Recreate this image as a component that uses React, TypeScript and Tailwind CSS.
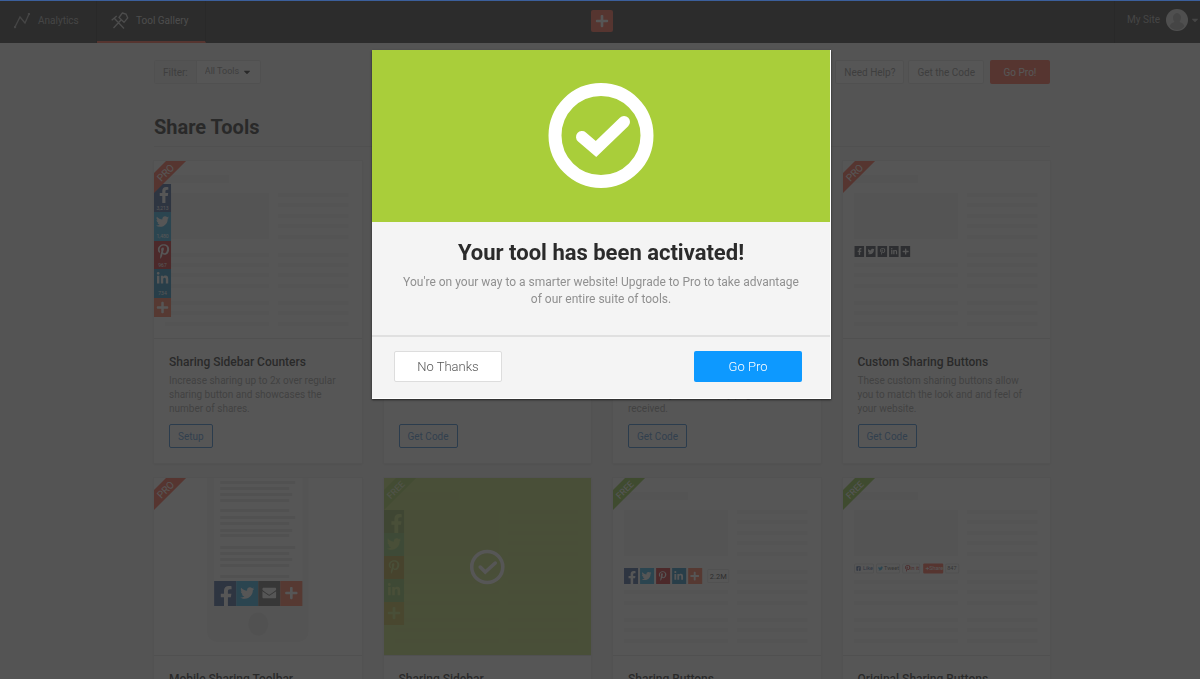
import { ReactNode, useState } from "react";
import {
  FaCaretDown,
  FaEnvelope,
  FaFacebookF,
  FaFacebookSquare,
  FaLinkedinIn,
  FaPinterestP,
  FaPlus,
  FaTwitter,
} from "react-icons/fa";

type Tool = {
  title: string;
  description: string;
  action: string;
  badge: "PRO" | "FREE" | null;
  preview: ReactNode;
};

const NETWORKS = [
  { Icon: FaFacebookF, color: "#3b5998", count: "3,213" },
  { Icon: FaTwitter, color: "#2ba9e1", count: "1,480" },
  { Icon: FaPinterestP, color: "#cb2027", count: "967" },
  { Icon: FaLinkedinIn, color: "#1c87bd", count: "734" },
  { Icon: FaPlus, color: "#fc6d4c", count: "" },
];

const RIGHT_LINES = [32, 42, 53, 63, 74, 92, 102, 112, 123, 140, 150, 161];

function Wireframe({ leftFrom = 92 }: { leftFrom?: number }) {
  return (
    <g fill="#f3f3f3">
      <rect x="11" y="14" width="64" height="8" />
      <rect x="11" y="32" width="104" height="46" />
      {RIGHT_LINES.map((y) => (
        <rect key={y} x="124" y={y} width="70" height="4" />
      ))}
      {RIGHT_LINES.filter((y) => y >= leftFrom).map((y) => (
        <rect key={y} x="11" y={y} width="104" height="4" />
      ))}
    </g>
  );
}

function Ribbon({ badge }: { badge: "PRO" | "FREE" }) {
  return (
    <g>
      <path
        d="M12 0H32L0 32V12Z"
        fill={badge === "PRO" ? "#fc5a42" : "#8cc63f"}
      />
      <text
        x="12"
        y="15"
        fill="#fff"
        fontSize={badge === "PRO" ? 10 : 9}
        textAnchor="middle"
        transform="rotate(-45 12 12)"
      >
        {badge}
      </text>
    </g>
  );
}

function CountersPreview() {
  const tops = [23, 51, 80, 108, 137, 156];
  return (
    <>
      <Wireframe />
      {NETWORKS.map(({ Icon, color, count }, i) => (
        <g key={color}>
          <rect
            y={tops[i]}
            width="17"
            height={tops[i + 1] - tops[i]}
            fill={color}
          />
          <Icon
            x={2}
            y={tops[i] + 3}
            size={i === 0 ? 16 : i === 2 ? 15 : 13}
            color="#fff"
          />
          <text
            x="8.5"
            y={tops[i] + 26}
            fontSize="5"
            fill="#fff"
            textAnchor="middle"
          >
            {count}
          </text>
        </g>
      ))}
    </>
  );
}

function CustomPreview() {
  return (
    <>
      <Wireframe leftFrom={102} />
      {NETWORKS.map(({ Icon, color }, i) => (
        <g key={color}>
          <rect x={11.5 + i * 11.5} y="85" width="9.5" height="11" fill="#333a45" />
          <Icon x={13 + i * 11.5} y="87" size={7} color="#fff" />
        </g>
      ))}
    </>
  );
}

function MobilePreview() {
  const lines = [
    [3, 75], [9, 69], [15, 72], [21, 69], [31, 69], [38, 75], [44, 69],
    [51, 72], [56, 69], [68, 75], [74, 69], [80, 72], [86, 69], [97, 69],
  ];
  const buttons = [
    { Icon: FaFacebookF, color: "#3b5998" },
    { Icon: FaTwitter, color: "#2ba9e1" },
    { Icon: FaEnvelope, color: "#666666" },
    { Icon: FaPlus, color: "#fc6d4c" },
  ];
  return (
    <>
      <path d="M53 0H154V154a10 10 0 0 1-10 10H63a10 10 0 0 1-10-10Z" fill="#f3f3f3" />
      <rect x="60" width="88" height="104" fill="#fff" />
      {lines.map(([y, width]) => (
        <rect key={y} x="66" y={y} width={width} height="3" fill="#e6e6e6" />
      ))}
      {buttons.map(({ Icon, color }, i) => (
        <g key={color}>
          <rect x={60 + i * 22} y="103" width="22" height="25" fill={color} />
          {i === 0 ? (
            <Icon x="62" y="108" size={20} color="#fff" />
          ) : (
            <Icon x={64 + i * 22} y="108" size={14} color="#fff" />
          )}
        </g>
      ))}
      <ellipse cx="104" cy="146" rx="10" ry="11.5" fill="#e6e6e6" />
    </>
  );
}

function SidebarPreview() {
  return (
    <>
      <Wireframe />
      {NETWORKS.map(({ Icon, color }, i) => (
        <g key={color}>
          <rect y={32 + i * 23} width="20" height="23" fill={color} />
          <Icon
            x="3"
            y={36 + i * 23}
            size={i === 0 ? 19 : 14}
            color="#fff"
          />
        </g>
      ))}
      <rect width="207" height="178" fill="#a9ce3a" opacity="0.75" />
      <g opacity="0.6">
        <Ribbon badge="FREE" />
      </g>
      <circle cx="103" cy="89" r="15.5" fill="none" stroke="#fff" strokeWidth="3.5" />
      <path
        d="M96 89l5 5 10-9"
        fill="none"
        stroke="#fff"
        strokeWidth="3.5"
        strokeLinecap="round"
      />
    </>
  );
}

function ButtonsPreview() {
  return (
    <>
      <Wireframe leftFrom={112} />
      {NETWORKS.map(({ Icon, color }, i) => (
        <g key={color}>
          <rect x={11 + i * 16} y="90" width="14" height="16" fill={color} />
          <Icon
            x={12.5 + i * 16}
            y="93"
            size={i === 0 ? 13 : 10}
            color="#fff"
          />
        </g>
      ))}
      <rect x="94.5" y="91.5" width="21" height="13" rx="1" fill="#fff" stroke="#e5e5e5" />
      <text x="105" y="101" fontSize="7.5" fill="#333" textAnchor="middle">
        2.2M
      </text>
    </>
  );
}

function OriginalPreview() {
  return (
    <>
      <Wireframe leftFrom={102} />
      <g fill="#fff" stroke="#ddd">
        <rect x="11.5" y="86" width="19" height="9" rx="1" />
        <rect x="33.5" y="86" width="23" height="9" rx="1" />
        <rect x="59.5" y="86" width="17" height="9" rx="1" />
        <rect x="102.5" y="86" width="13" height="9" rx="1" />
      </g>
      <rect x="80" y="85.5" width="20" height="10" rx="1" fill="#fc5a42" />
      <FaFacebookSquare x="13" y="88" size={5} color="#3b5998" />
      <FaTwitter x="35" y="88" size={5} color="#2ba9e1" />
      <FaPinterestP x="61" y="87" size={7} color="#cb2027" />
      <FaPlus x="82" y="88.5" size={4} color="#fff" />
      <g fontSize="5.5" fill="#555">
        <text x="20" y="92.5" fill="#3b5998">Like</text>
        <text x="41" y="92.5">Tweet</text>
        <text x="67" y="92.5" fill="#cb2027">in it</text>
        <text x="86" y="92.5" fill="#fff">Share</text>
        <text x="104" y="92.5">847</text>
      </g>
    </>
  );
}

const TOOLS: Tool[] = [
  {
    title: "Sharing Sidebar Counters",
    description:
      "Increase sharing up to 2x over regular sharing button and showcases the number of shares.",
    action: "Setup",
    badge: "PRO",
    preview: <CountersPreview />,
  },
  {
    title: "Sharing Toolbar",
    description: "Put share buttons on every page.",
    action: "Get Code",
    badge: "PRO",
    preview: <Wireframe />,
  },
  {
    title: "Share Counters",
    description:
      "Share buttons that show your visitors how many shares every page has received.",
    action: "Get Code",
    badge: "PRO",
    preview: <Wireframe />,
  },
  {
    title: "Custom Sharing Buttons",
    description:
      "These custom sharing buttons allow you to match the look and and feel of your website.",
    action: "Get Code",
    badge: "PRO",
    preview: <CustomPreview />,
  },
  {
    title: "Mobile Sharing Toolbar",
    description: "Share buttons made for phones.",
    action: "Get Code",
    badge: "PRO",
    preview: <MobilePreview />,
  },
  {
    title: "Sharing Sidebar",
    description: "Share buttons on the side of the page.",
    action: "Get Code",
    badge: null,
    preview: <SidebarPreview />,
  },
  {
    title: "Sharing Buttons",
    description: "Share buttons within your content.",
    action: "Get Code",
    badge: "FREE",
    preview: <ButtonsPreview />,
  },
  {
    title: "Original Sharing Buttons",
    description: "The native buttons of each network.",
    action: "Get Code",
    badge: "FREE",
    preview: <OriginalPreview />,
  },
];

function ToolCard({ tool }: { tool: Tool }) {
  return (
    <article className="flex flex-col bg-white shadow-[0_0_0_1px_#ececec,0_1px_2px_#ccc]">
      <svg
        viewBox="0 0 207 177"
        preserveAspectRatio="none"
        className="block h-[177px] w-full"
        aria-hidden="true"
      >
        {tool.preview}
        {tool.badge && <Ribbon badge={tool.badge} />}
      </svg>
      <div className="flex flex-1 flex-col items-start border-t border-[#e2e2e2] p-[15px]">
        <h3 className="text-xs leading-4 font-medium text-[#222]">
          {tool.title}
        </h3>
        <p className="mt-1 min-h-[42px] pr-2 text-[10px] leading-[14px] text-[#999]">
          {tool.description}
        </p>
        <button className="mt-2 h-6 cursor-pointer rounded-xs border border-[#2a7fd0] px-2 text-[10px] text-[#4a8fd6]">
          {tool.action}
        </button>
      </div>
    </article>
  );
}

function Header() {
  return (
    <header className="grid h-[43px] grid-cols-[1fr_auto_1fr] bg-[#2e2e2e] text-[10px] text-[#ccc]">
      <nav className="flex">
        <a href="#analytics" className="flex w-[97px] items-center gap-2 border-r border-[#222] pb-0.5 pl-3.5 text-[#aaa]">
          <svg width="16" height="16" viewBox="0 0 16 16" fill="none" stroke="currentColor" strokeWidth="1.3">
            <path d="M1 14L6 4l5 6 4-9" />
            <circle cx="1" cy="14" r=".6" />
            <circle cx="15" cy="1" r=".6" />
          </svg>
          Analytics
        </a>
        <a href="#tools" className="flex w-[109px] items-center gap-[7px] border-r border-b-2 border-r-[#222] border-b-[#fc5a42] pl-3.5">
          <svg width="18" height="18" viewBox="0 0 18 18" fill="none" stroke="currentColor" strokeWidth="1.3">
            <path d="M11.3 1L15 2l1.7 4-3.7 4.3L8 5.5ZM10 8l-7.5 8M.7 8.3l5-4.3M3.5 6.5L13 16.5" />
          </svg>
          Tool Gallery
        </a>
      </nav>
      <div className="ml-1 flex items-center pb-0.5">
        <div className="flex size-[22px] items-center justify-center rounded-xs bg-[#fc5a42]">
          <FaPlus size={14} className="text-white" />
        </div>
      </div>
      <div className="flex justify-end">
        <button className="flex cursor-pointer items-center border-l border-[#222] pb-1 pl-3 text-[#aaa]">
          My Site
          <svg width="22" height="22" viewBox="0 0 22 22" className="ml-1.5">
            <circle cx="11" cy="11" r="11" fill="#ddd" />
            <path d="M11 4a4.5 4.5 0 0 1 4 5c0 2-1 3-1.5 4 2 .8 4 1.5 5 4a9 9 0 0 1-15 0c1-2.5 3-3.2 5-4C8 12 7 11 7 9a4.5 4.5 0 0 1 4-5Z" fill="#aaa" />
          </svg>
          <FaCaretDown size={10} className="ml-0.5" />
        </button>
      </div>
    </header>
  );
}

function ActivatedModal({ onClose }: { onClose: () => void }) {
  return (
    <div className="fixed inset-0 flex items-start justify-center bg-[#2c2c2c]/80 pt-[50px] pl-[3px]">
      <div
        role="dialog"
        aria-labelledby="modal-title"
        className="w-full max-w-[459px] border-r border-b border-white bg-[#f4f4f4] shadow-[0_1px_2px_rgba(0,0,0,0.6)]"
      >
        <div className="flex h-[172px] items-center justify-center bg-[#a9ce3a]">
          <svg width="106" height="106" viewBox="0 0 106 106" fill="none" stroke="#fff">
            <circle cx="53" cy="52.5" r="46" strokeWidth="13" />
            <path d="M34 54l14 12 28-27" strokeWidth="12" strokeLinecap="round" />
          </svg>
        </div>
        <div className="h-[115px] border-b-2 border-[#e0e0e0] px-7 pt-4 text-center">
          <h2 id="modal-title" className="text-[22px] leading-[30px] font-bold text-[#2b2b2b]">
            Your tool has been activated!
          </h2>
          <p className="mt-1.5 text-xs leading-[17px] text-[#909090]">
            You're on your way to a smarter website! Upgrade to Pro to take
            advantage of our entire suite of tools.
          </p>
        </div>
        <div className="flex justify-between pt-3.5 pr-7 pb-4 pl-[22px] text-[13px] font-light">
          <button
            onClick={onClose}
            className="h-[31px] w-[108px] cursor-pointer rounded-xs border border-[#ddd] bg-white text-[#555]"
          >
            No Thanks
          </button>
          <button className="h-[31px] w-[108px] cursor-pointer rounded-xs bg-[#0d99ff] text-white">
            Go Pro
          </button>
        </div>
      </div>
    </div>
  );
}

function App() {
  const [showModal, setShowModal] = useState(true);

  return (
    <div
      className={`min-h-screen bg-[#f3f3f3] font-[Roboto,sans-serif] ${showModal ? "h-screen overflow-hidden" : ""}`}
    >
      <Header />
      <main className="mx-auto max-w-[900px] pt-[17px] pb-8 pl-1">
        <div className="flex justify-between text-[10px] text-[#888]">
          <div className="flex h-6 rounded-xs border border-[#e2e2e2] bg-white">
            <label
              htmlFor="filter"
              className="flex items-center border-r border-[#e2e2e2] bg-[#eee] px-2"
            >
              Filter:
            </label>
            <div className="relative flex items-center">
              <select
                id="filter"
                className="h-full w-[63px] cursor-pointer appearance-none pl-2 text-[9px] outline-none"
              >
                <option>All Tools</option>
                <option>Share Tools</option>
              </select>
              <FaCaretDown size={10} className="pointer-events-none absolute right-2 text-[#222]" />
            </div>
          </div>
          <div className="flex gap-1">
            <button className="h-6 cursor-pointer rounded-xs border border-[#e2e2e2] bg-white px-2">
              Need Help?
            </button>
            <button className="h-6 cursor-pointer rounded-xs border border-[#e2e2e2] bg-white px-2">
              Get the Code
            </button>
            <button className="ml-0.5 h-6 w-[60px] cursor-pointer rounded-xs bg-[#fc5a42] text-white">
              Go Pro!
            </button>
          </div>
        </div>
        <h1 className="mt-7 border-b border-[#e2e2e2] pb-1 text-xl leading-[30px] font-bold text-[#222]">
          Share Tools
        </h1>
        <div className="mt-3.5 grid grid-cols-4 gap-x-[22px] gap-y-[15px]">
          {TOOLS.map((tool) => (
            <ToolCard key={tool.title} tool={tool} />
          ))}
        </div>
      </main>
      {showModal && <ActivatedModal onClose={() => setShowModal(false)} />}
      <div className="fixed inset-x-0 top-0 h-px bg-[#3b5f9c]" />
    </div>
  );
}

export default App;
